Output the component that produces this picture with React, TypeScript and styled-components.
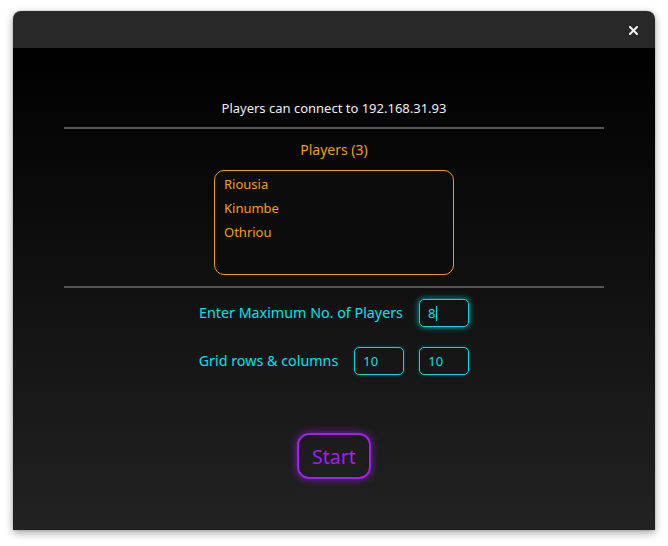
import React from "react";
import styled, { createGlobalStyle } from "styled-components";

const Global = createGlobalStyle`
  html, body { margin: 0; padding: 0; background: #ffffff; }
  body { font-family: "Noto Sans", "Open Sans", sans-serif; }
`;

const Stage = styled.div`
  padding: 11px 13px;
  width: 668px;
  height: 546px;
  box-sizing: border-box;
`;

const Window = styled.div`
  width: 642px;
  height: 519px;
  border-radius: 8px 8px 0 0;
  overflow: hidden;
  display: flex;
  flex-direction: column;
  box-shadow: 0 3px 9px rgba(0, 0, 0, 0.35), 0 0 2px rgba(0, 0, 0, 0.25);
`;

const TitleBar = styled.div`
  height: 37px;
  flex: none;
  background: #282828;
  display: flex;
  align-items: center;
  justify-content: flex-end;
  padding-right: 14px;
`;

const CloseButton = styled.button`
  width: 16px;
  height: 16px;
  padding: 0;
  border: none;
  background: transparent;
  display: flex;
  align-items: center;
  justify-content: center;
  margin-top: 2px;
`;

const Content = styled.div`
  flex: 1;
  background: linear-gradient(to bottom, #000000 0%, #222222 100%);
  display: flex;
  flex-direction: column;
  align-items: center;
  padding-top: 51px;
`;

const Info = styled.div`
  color: #eeeeee;
  font-size: 13px;
  line-height: 18px;
`;

const Separator = styled.div<{ $top: number }>`
  width: 540px;
  height: 2px;
  background: #555555;
  margin-top: ${(p) => p.$top}px;
`;

const PlayersTitle = styled.div`
  color: #f0a000;
  font-size: 14px;
  line-height: 20px;
  margin-top: 11px;
`;

const PlayerList = styled.ul`
  list-style: none;
  margin: 10px 0 0;
  width: 240px;
  height: 105px;
  box-sizing: border-box;
  border: 1px solid #f0a000;
  border-radius: 10px;
  background: #0c0c0c;
  padding: 1px 9px;
`;

const PlayerItem = styled.li`
  color: #f0a000;
  font-size: 13px;
  line-height: 24px;
`;

const Row = styled.div<{ $top: number }>`
  display: flex;
  align-items: center;
  margin-top: ${(p) => p.$top}px;
  gap: 15px;
`;

const Label = styled.span`
  color: #00e0ec;
  font-size: 14.3px;
  line-height: 20px;
  margin-right: 1px;
`;

const NumberBox = styled.div<{ $glow?: boolean }>`
  width: 50px;
  height: 28px;
  box-sizing: border-box;
  border: 1px solid #00d8e4;
  border-radius: 5px;
  display: flex;
  align-items: center;
  padding-left: 8px;
  color: #00e0ec;
  font-size: 13px;
  box-shadow: ${(p) =>
    p.$glow ? "0 0 6px rgba(0, 224, 236, 0.75)" : "0 0 3px rgba(0, 224, 236, 0.35)"};
`;

const Caret = styled.span`
  display: inline-block;
  width: 1px;
  height: 15px;
  background: #00e0ec;
  margin-left: 1px;
`;

const StartButton = styled.button`
  margin-top: 58px;
  width: 74px;
  height: 46px;
  box-sizing: border-box;
  border: 2px solid #a020f0;
  border-radius: 12px;
  background: transparent;
  color: #a020f0;
  font-family: "Noto Sans", "Open Sans", sans-serif;
  font-size: 19.5px;
  padding: 0;
  box-shadow: 0 0 8px rgba(160, 32, 240, 0.7);
`;

export default function App() {
  const players = ["Riousia", "Kinumbe", "Othriou"];
  return (
    <Stage>
      <Global />
      <Window>
        <TitleBar>
          <CloseButton aria-label="close">
            <svg width="9" height="9" viewBox="0 0 9 9">
              <path d="M1 1 L8 8 M8 1 L1 8" stroke="#f2f2f2" strokeWidth="2" strokeLinecap="square" />
            </svg>
          </CloseButton>
        </TitleBar>
        <Content>
          <Info>Players can connect to 192.168.31.93</Info>
          <Separator $top={10} />
          <PlayersTitle>Players ({players.length})</PlayersTitle>
          <PlayerList>
            {players.map((p) => (
              <PlayerItem key={p}>{p}</PlayerItem>
            ))}
          </PlayerList>
          <Separator $top={11} />
          <Row $top={11}>
            <Label>Enter Maximum No. of Players</Label>
            <NumberBox $glow>
              8<Caret />
            </NumberBox>
          </Row>
          <Row $top={20}>
            <Label>Grid rows &amp; columns</Label>
            <NumberBox>10</NumberBox>
            <NumberBox>10</NumberBox>
          </Row>
          <StartButton>Start</StartButton>
        </Content>
      </Window>
    </Stage>
  );
}
